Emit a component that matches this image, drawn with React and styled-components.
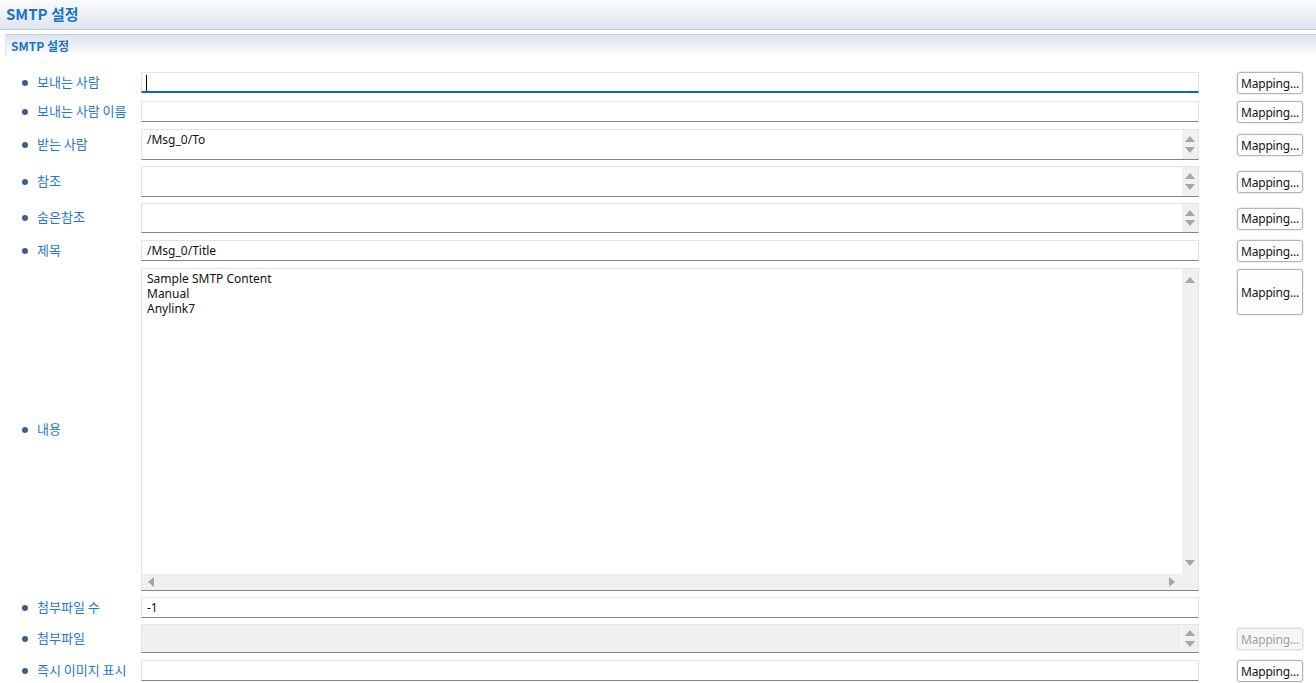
import React from 'react';
import styled, { createGlobalStyle, css } from 'styled-components';

const GlobalStyle = createGlobalStyle`
  html, body {
    margin: 0;
    padding: 0;
    background: #fff;
  }
  body {
    font-family: "Noto Sans", "Noto Sans CJK KR", sans-serif;
  }
`;

const Page = styled.div`
  width: 1316px;
  height: 683px;
  overflow: hidden;
  background: #fff;
`;

const TitleBar = styled.div`
  height: 30px;
  box-sizing: border-box;
  display: flex;
  align-items: center;
  padding: 0 0 2px 6px;
  border-bottom: 1px solid #c4ccd6;
  background: linear-gradient(#fbfcfd, #dee5ee);
  font: bold 15px "Noto Sans CJK KR", sans-serif;
  color: #1a73c8;
`;

const Section = styled.div`
  margin: 4px 0 0 5px;
`;

const SectionHead = styled.div`
  height: 23px;
  box-sizing: border-box;
  display: flex;
  align-items: center;
  padding: 0 0 1px 5px;
  border-top: 1px solid #c6ced8;
  border-left: 1px solid #e3e8ef;
  background: linear-gradient(#dbe3ee, #ffffff);
  font: bold 12px "Noto Sans CJK KR", sans-serif;
  color: #1a73c8;
`;

const Form = styled.div`
  display: grid;
  grid-template-columns: 141px 1fr 104px;
  row-gap: 6px;
  align-items: center;
  padding: 14px 13px 0 0;
`;

const Label = styled.div`
  display: flex;
  align-items: center;
  gap: 9px;
  padding: 0 0 2px 22px;
  font: 13px/16px "Noto Sans CJK KR", sans-serif;
  color: #1f78d1;
  white-space: nowrap;

  &::before {
    content: '';
    width: 6px;
    height: 6px;
    margin-top: 2px;
    border-radius: 50%;
    background: #3d5d89;
  }
`;

const Field = styled.div`
  height: ${(p) => p.$h}px;
  box-sizing: border-box;
  display: grid;
  grid-template-columns: 1fr auto;
  grid-template-rows: 1fr auto;
  border: 1px solid #e3e3e3;
  border-bottom: 1px solid #858585;
  background: ${(p) => (p.$disabled ? '#f0f0f0' : '#fff')};
  font-size: 12px;
  color: #111;
  overflow: hidden;

  ${(p) =>
    p.$focused &&
    css`
      border-bottom: 2px solid #0a63bd;
    `}
`;

const Content = styled.div`
  position: relative;
  padding: ${(p) => (p.$multi ? '2px 5px' : '0 5px')};
  display: flex;
  flex-direction: column;
  justify-content: ${(p) => (p.$multi ? 'flex-start' : 'center')};
  line-height: 15px;
  white-space: pre;
`;

const Caret = styled.span`
  position: absolute;
  left: 4px;
  top: 2px;
  width: 1px;
  height: 16px;
  background: #000;
`;

const VScroll = styled.div`
  width: 16px;
  display: flex;
  flex-direction: column;
  justify-content: space-between;
  align-items: center;
  padding: ${(p) => p.$pad}px 0;
  background: #f0f0f0;
  border-left: ${(p) => (p.$disabled ? '1px solid #fafafa' : 'none')};
`;

const HScroll = styled.div`
  grid-column: 1 / span 2;
  height: 16px;
  display: flex;
  align-items: center;
  justify-content: space-between;
  padding: 0 23px 0 6px;
  background: #f0f0f0;
`;

const Arrow = styled.span`
  width: 0;
  height: 0;
  border-style: solid;
  ${(p) =>
    p.$dir === 'up' &&
    css`
      border-width: 0 5px 6px 5px;
      border-color: transparent transparent #a6a6a6 transparent;
    `}
  ${(p) =>
    p.$dir === 'down' &&
    css`
      border-width: 6px 5px 0 5px;
      border-color: #a6a6a6 transparent transparent transparent;
    `}
  ${(p) =>
    p.$dir === 'left' &&
    css`
      border-width: 5px 6px 5px 0;
      border-color: transparent #a6a6a6 transparent transparent;
    `}
  ${(p) =>
    p.$dir === 'right' &&
    css`
      border-width: 5px 0 5px 6px;
      border-color: transparent transparent transparent #a6a6a6;
    `}
`;

const ButtonCell = styled.div`
  align-self: ${(p) => (p.$top ? 'start' : 'center')};
  padding-left: 38px;
  display: flex;
`;

const MapButton = styled.button`
  width: 66px;
  height: ${(p) => p.$h}px;
  margin: 1px 0 0 0;
  padding: 0;
  box-sizing: border-box;
  border: 1px solid ${(p) => (p.disabled ? '#dcdcdc' : '#b4b4b4')};
  border-radius: 3px;
  background: ${(p) => (p.disabled ? '#f7f7f7' : '#fdfdfd')};
  box-shadow: 0 0 0 1px #efefef;
  font: 12px "Noto Sans", sans-serif;
  letter-spacing: -0.2px;
  color: ${(p) => (p.disabled ? '#a2a2a2' : '#141414')};
`;

const rows = [
  { label: '보내는 사람', h: 21, focused: true },
  { label: '보내는 사람 이름', h: 21 },
  { label: '받는 사람', h: 31, value: '/Msg_0/To', vscroll: true, pad: 6 },
  { label: '참조', h: 31, vscroll: true, pad: 6 },
  { label: '숨은참조', h: 30, vscroll: true, pad: 6 },
  { label: '제목', h: 21, value: '/Msg_0/Title' },
  {
    label: '내용',
    h: 323,
    value: 'Sample SMTP Content\nManual\nAnylink7',
    vscroll: true,
    hscroll: true,
    pad: 8,
    btnH: 46,
  },
  { label: '첨부파일 수', h: 21, value: '-1', noButton: true },
  { label: '첨부파일', h: 29, vscroll: true, pad: 5, disabled: true },
  { label: '즉시 이미지 표시', h: 21 },
];

const Row = ({ row }) => {
  const multi = row.vscroll;
  return (
    <>
      <Label>{row.label}</Label>
      <Field $h={row.h} $focused={row.focused} $disabled={row.disabled}>
        <Content $multi={multi}>
          {row.focused && <Caret />}
          {row.value}
        </Content>
        {row.vscroll && (
          <VScroll $pad={row.pad} $disabled={row.disabled}>
            <Arrow $dir="up" />
            <Arrow $dir="down" />
          </VScroll>
        )}
        {row.hscroll && (
          <HScroll>
            <Arrow $dir="left" />
            <Arrow $dir="right" />
          </HScroll>
        )}
      </Field>
      <ButtonCell $top={!!row.btnH}>
        {!row.noButton && (
          <MapButton $h={row.btnH || 22} disabled={row.disabled}>
            Mapping...
          </MapButton>
        )}
      </ButtonCell>
    </>
  );
};

export default function App() {
  return (
    <Page>
      <GlobalStyle />
      <TitleBar>SMTP 설정</TitleBar>
      <Section>
        <SectionHead>SMTP 설정</SectionHead>
      </Section>
      <Form>
        {rows.map((row) => (
          <Row key={row.label} row={row} />
        ))}
      </Form>
    </Page>
  );
}
